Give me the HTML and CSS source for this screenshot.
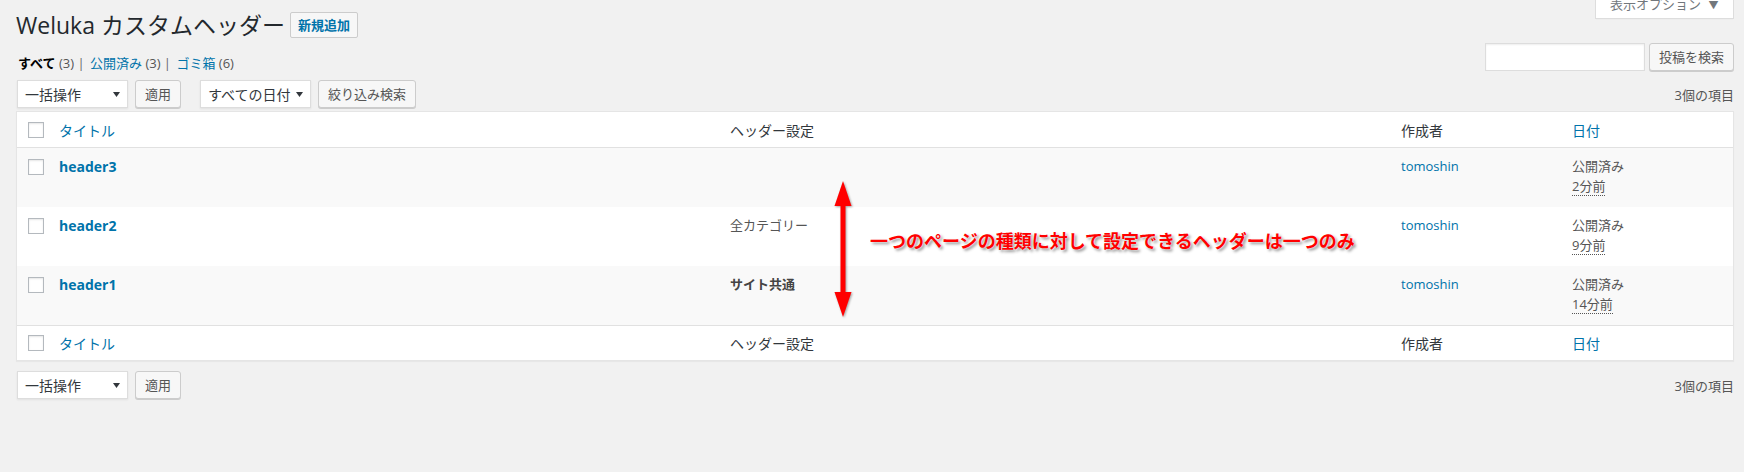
FILE: index.html
```html
<!DOCTYPE html>
<html lang="ja">
<head>
<meta charset="UTF-8">
<title>Weluka カスタムヘッダー</title>
<link rel="stylesheet" href="styles.css">
</head>
<body>

<div class="wrap">
  <div class="screen-meta">
    <div class="screen-tab">表示オプション <span class="tri">▼</span></div>
  </div>

  <div class="page-head">
    <h1>Weluka カスタムヘッダー</h1>
    <a href="#" class="add-new">新規追加</a>
  </div>

  <div class="filter-row">
    <ul class="subsubsub">
      <li><a href="#" class="current">すべて <span class="count">(3)</span></a> |</li>
      <li><a href="#">公開済み <span class="count">(3)</span></a> |</li>
      <li><a href="#">ゴミ箱 <span class="count">(6)</span></a></li>
    </ul>
    <div class="search-box">
      <input type="search" class="search-input">
      <button type="button" class="button">投稿を検索</button>
    </div>
  </div>

  <div class="tablenav">
    <div class="actions">
      <div class="select">一括操作 <svg width="7" height="5" viewBox="0 0 7 5"><polygon points="0,0 7,0 3.5,5" fill="#32373c"/></svg></div>
      <button type="button" class="button">適用</button>
    </div>
    <div class="actions second">
      <div class="select">すべての日付 <svg width="7" height="5" viewBox="0 0 7 5"><polygon points="0,0 7,0 3.5,5" fill="#32373c"/></svg></div>
      <button type="button" class="button">絞り込み検索</button>
    </div>
    <div class="displaying-num">3個の項目</div>
  </div>

  <table class="posts">
    <colgroup>
      <col class="c-check">
      <col class="c-title">
      <col class="c-setting">
      <col class="c-author">
      <col class="c-date">
    </colgroup>
    <thead>
      <tr>
        <th class="check"><span class="cb"></span></th>
        <th><a href="#">タイトル</a></th>
        <th>ヘッダー設定</th>
        <th>作成者</th>
        <th><a href="#">日付</a></th>
      </tr>
    </thead>
    <tbody>
      <tr class="alt">
        <td class="check"><span class="cb"></span></td>
        <td><a href="#" class="row-title">header3</a></td>
        <td></td>
        <td><a href="#">tomoshin</a></td>
        <td>公開済み<br><abbr>2分前</abbr></td>
      </tr>
      <tr>
        <td class="check"><span class="cb"></span></td>
        <td><a href="#" class="row-title">header2</a></td>
        <td>全カテゴリー</td>
        <td><a href="#">tomoshin</a></td>
        <td>公開済み<br><abbr>9分前</abbr></td>
      </tr>
      <tr class="alt">
        <td class="check"><span class="cb"></span></td>
        <td><a href="#" class="row-title">header1</a></td>
        <td><strong>サイト共通</strong></td>
        <td><a href="#">tomoshin</a></td>
        <td>公開済み<br><abbr>14分前</abbr></td>
      </tr>
    </tbody>
    <tfoot>
      <tr>
        <th class="check"><span class="cb"></span></th>
        <th><a href="#">タイトル</a></th>
        <th>ヘッダー設定</th>
        <th>作成者</th>
        <th><a href="#">日付</a></th>
      </tr>
    </tfoot>
  </table>

  <div class="tablenav bottom">
    <div class="actions">
      <div class="select">一括操作 <svg width="7" height="5" viewBox="0 0 7 5"><polygon points="0,0 7,0 3.5,5" fill="#32373c"/></svg></div>
      <button type="button" class="button">適用</button>
    </div>
    <div class="displaying-num">3個の項目</div>
  </div>

  <!-- annotation drawn over the screenshot -->
  <svg class="note-arrow" width="18" height="138" viewBox="0 0 18 138">
    <rect x="6.5" y="20" width="5" height="98" fill="#f00"/>
    <polygon points="9,1 17.5,26 0.5,26" fill="#f00"/>
    <polygon points="0.5,112 17.5,112 9,137" fill="#f00"/>
  </svg>
  <div class="note-text">一つのページの種類に対して設定できるヘッダーは一つのみ</div>
</div>

</body>
</html>
```

FILE: styles.css
```css
* {
  box-sizing: border-box;
}

body {
  margin: 0;
  background: #f1f1f1;
  color: #444;
  font-family: "Open Sans", "Noto Sans CJK JP", sans-serif;
  font-size: 13px;
}

a {
  color: #0073aa;
  text-decoration: none;
}

.wrap {
  position: relative;
  width: 1744px;
  height: 472px;
  overflow: hidden;
  padding: 0 10px 0 16px;
}

/* screen options tab */
.screen-meta {
  display: flex;
  justify-content: flex-end;
  height: 0;
}

.screen-tab {
  margin-top: -8px;
  width: 139px;
  height: 27px;
  line-height: 25px;
  padding-left: 14px;
  background: #fff;
  border: 1px solid #ddd;
  border-top: none;
  box-shadow: 0 1px 1px -1px rgba(0,0,0,0.1);
  color: #72777c;
  font-size: 13px;
}

.screen-tab .tri {
  font-size: 10px;
  margin-left: 4px;
  color: #72777c;
}

/* title */
.page-head {
  display: flex;
  align-items: center;
  height: 30px;
  margin-top: 10px;
}

.page-head h1 {
  margin: 0;
  font-size: 23px;
  font-weight: 400;
  line-height: 30px;
  color: #23282d;
}

.add-new {
  margin-left: 5px;
  height: 26px;
  line-height: 24px;
  padding: 0 7px;
  border: 1px solid #ccc;
  border-radius: 2px;
  background: #f7f7f7;
  font-size: 13px;
  font-weight: 700;
  color: #0073aa;
}

/* status links + search */
.filter-row {
  display: flex;
  justify-content: space-between;
  height: 28px;
  margin-top: 3px;
}

.subsubsub {
  list-style: none;
  margin: 10px 0 0 2px;
  padding: 0;
  line-height: 20px;
  color: #666;
  font-size: 13px;
}

.subsubsub li {
  display: inline;
  margin-right: 2px;
}

.subsubsub a.current {
  color: #000;
  font-weight: 700;
}

.subsubsub .count {
  color: #555;
  font-weight: 400;
}

.search-box {
  display: flex;
  gap: 4px;
}

.search-input {
  width: 160px;
  height: 28px;
  margin: 0;
  border: 1px solid #ddd;
  background: #fff;
  box-shadow: inset 0 1px 2px rgba(0,0,0,0.07);
}

.button {
  height: 28px;
  margin: 0;
  padding: 0 9px;
  border: 1px solid #ccc;
  border-radius: 3px;
  background: #f7f7f7;
  box-shadow: 0 1px 0 #ccc;
  color: #555;
  font-family: inherit;
  font-size: 13px;
  line-height: 26px;
}

/* table navigation */
.tablenav {
  display: flex;
  align-items: center;
  height: 28px;
  margin-top: 9px;
}

.tablenav.bottom {
  margin-top: 10px;
}

.tablenav .actions {
  display: flex;
  gap: 7px;
}

.tablenav .second {
  margin-left: 18px;
}

.select {
  display: flex;
  align-items: center;
  justify-content: space-between;
  width: 111px;
  height: 28px;
  margin-left: 1px;
  padding: 0 7px 0 7px;
  background: #fff;
  border: 1px solid #ddd;
  box-shadow: 0 1px 2px rgba(0,0,0,0.07);
  color: #32373c;
  font-size: 14px;
}

.displaying-num {
  margin-left: auto;
  color: #555;
  font-size: 13px;
}

/* list table */
.posts {
  width: 1718px;
  margin-top: 3px;
  border: 1px solid #e5e5e5;
  border-spacing: 0;
  table-layout: fixed;
  background: #fff;
  box-shadow: 0 1px 1px rgba(0,0,0,0.04);
}

.c-check { width: 32px; }
.c-title { width: 671px; }
.c-setting { width: 671px; }
.c-author { width: 171px; }
.c-date { width: 171px; }

.posts th {
  text-align: left;
  font-weight: 400;
  font-size: 14px;
  color: #32373c;
  padding: 0 10px;
  vertical-align: middle;
}

.posts thead th {
  height: 36px;
  border-bottom: 1px solid #e1e1e1;
}

.posts tfoot th {
  height: 35px;
  border-top: 1px solid #e1e1e1;
}

.posts td {
  height: 59px;
  padding: 9px 10px 0;
  vertical-align: top;
  line-height: 19.5px;
  color: #555;
  font-size: 13px;
}

.posts tr.alt td {
  background: #f9f9f9;
}

.posts .check {
  padding: 0 0 0 11px;
}

.posts td.check {
  padding-top: 11px;
}

.cb {
  display: block;
  width: 16px;
  height: 16px;
  background: #fff;
  border: 1px solid #b4b9be;
  box-shadow: inset 0 1px 2px rgba(0,0,0,0.1);
}

.row-title {
  font-size: 14px;
  font-weight: 700;
}

.posts td strong {
  color: #444;
  font-weight: 700;
}

.posts abbr {
  text-decoration: none;
  border-bottom: 1px dotted #555;
}

/* annotation */
.note-arrow {
  position: absolute;
  left: 834px;
  top: 180px;
  filter: drop-shadow(1px 1px 1px rgba(0,0,0,0.35));
}

.note-text {
  position: absolute;
  left: 870px;
  top: 230px;
  font-size: 18px;
  line-height: 22px;
  font-weight: 700;
  color: #f00;
  white-space: nowrap;
  text-shadow: 0 0 2px #fff, 2px 2px 3px rgba(0,0,0,0.45);
}
```
